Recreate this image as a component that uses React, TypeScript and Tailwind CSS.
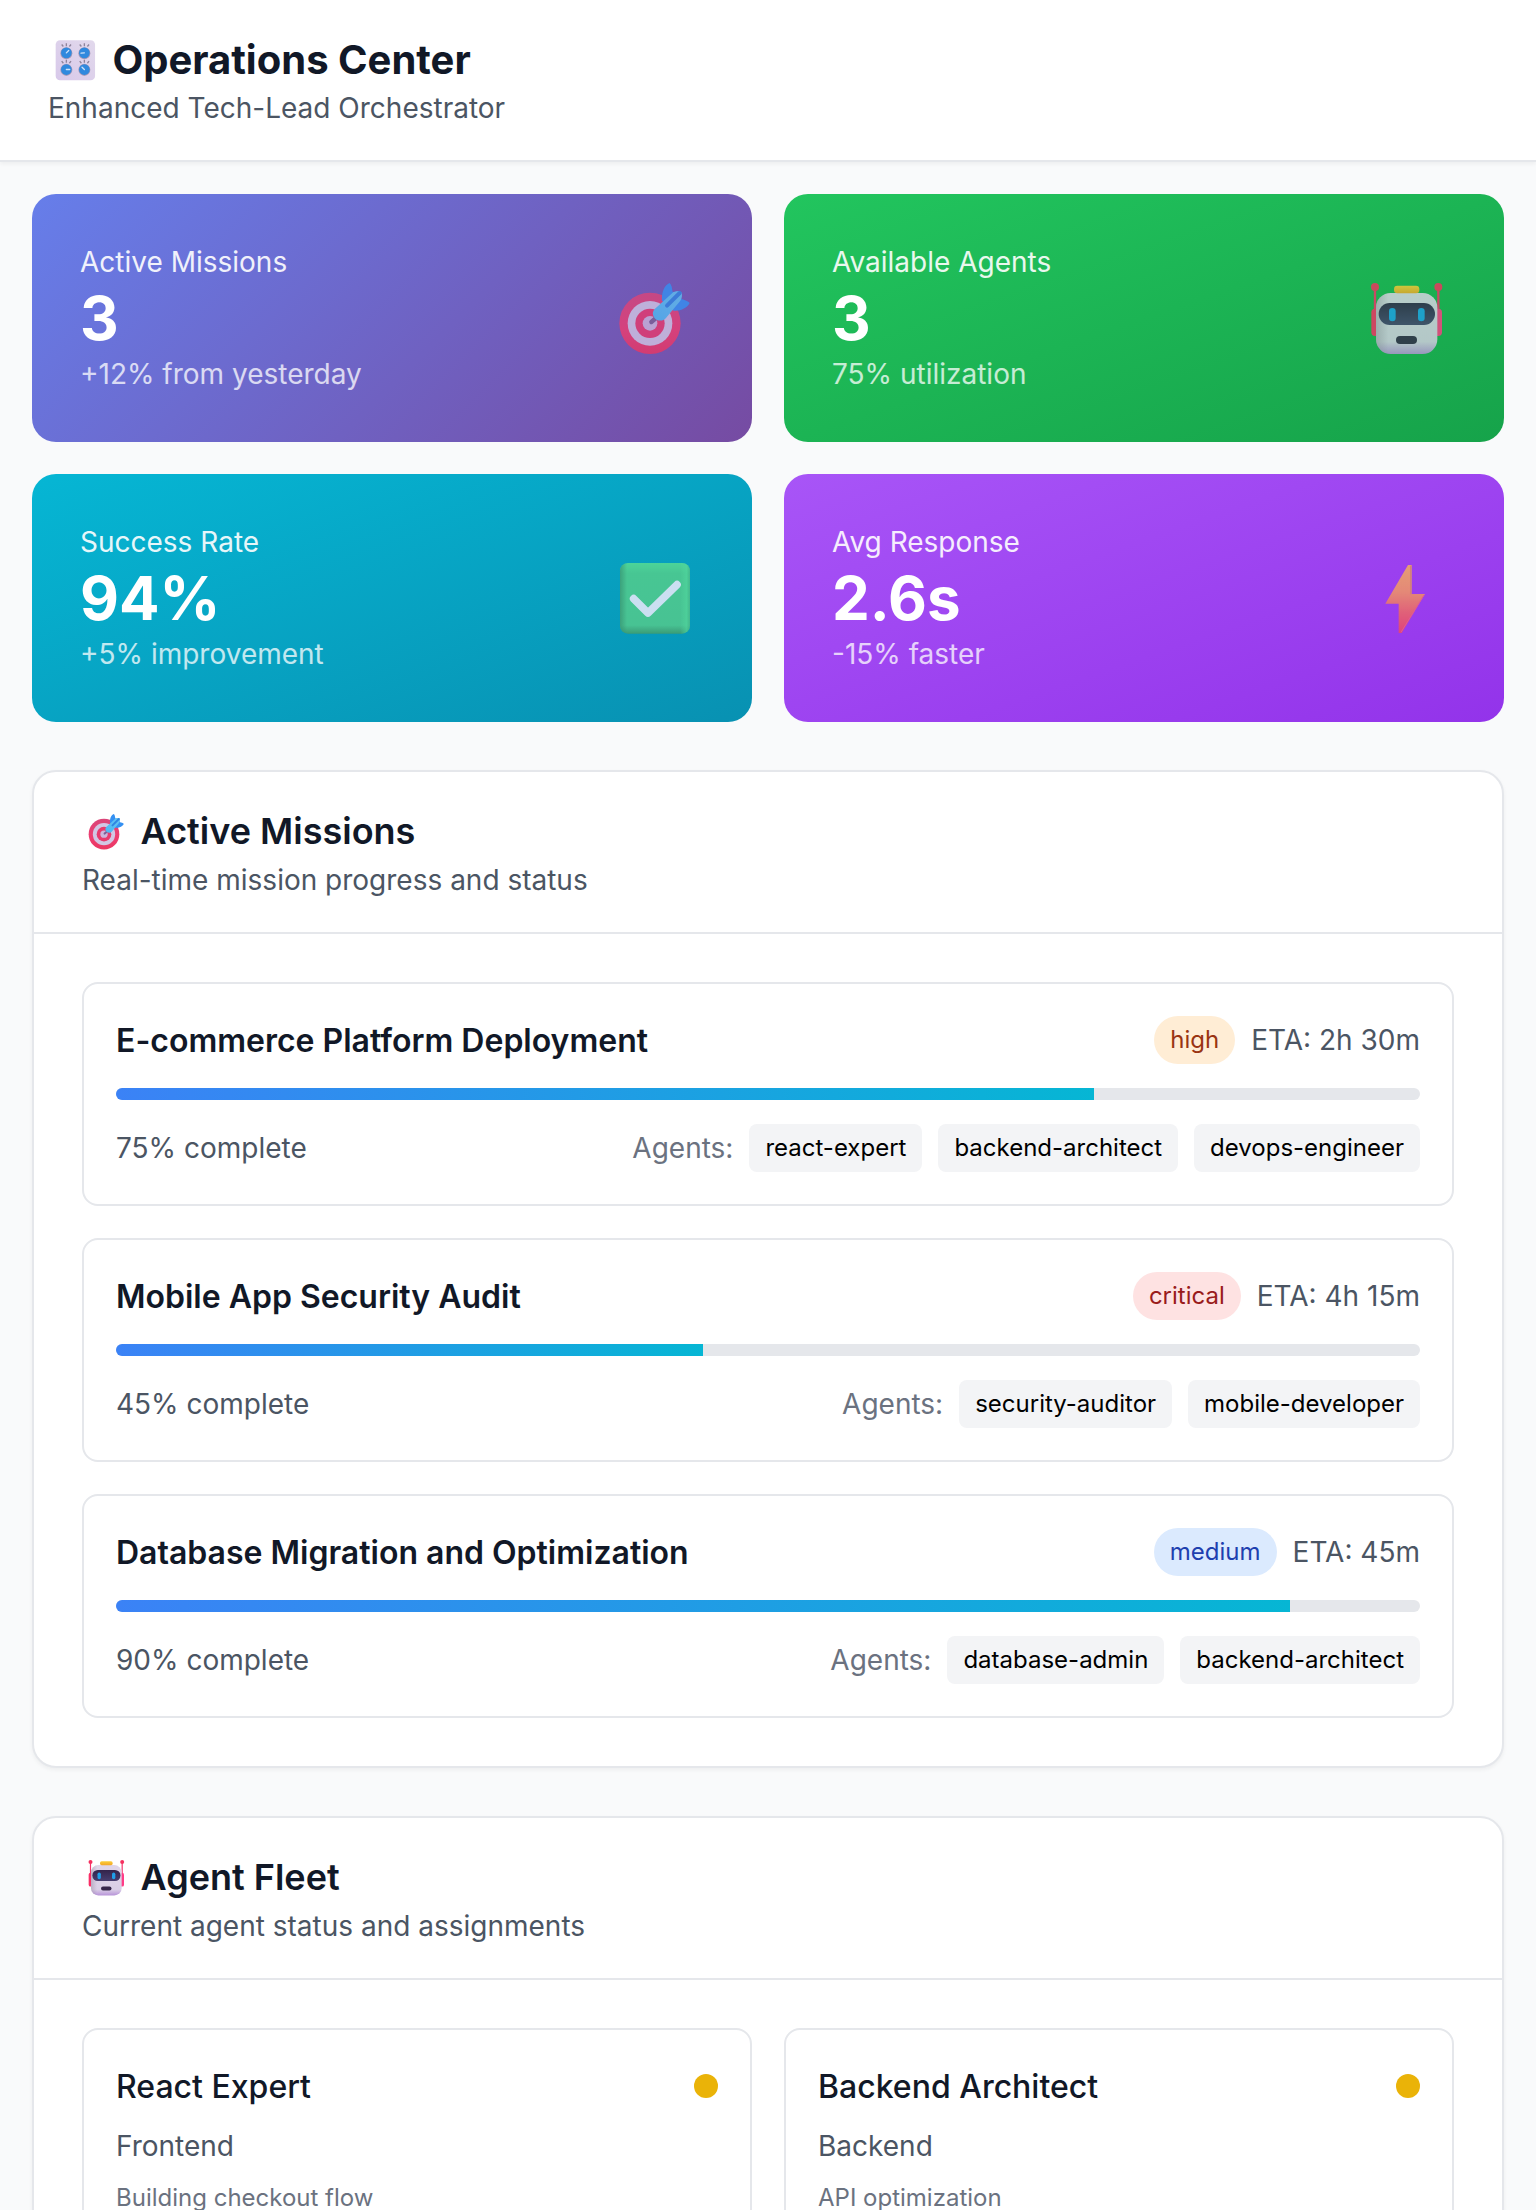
import type { ReactNode } from "react";

function TargetIcon({ className, id }: { className: string; id: string }) {
  return (
    <svg viewBox="18 27 294 294" className={className}>
      <defs>
        <linearGradient id={`${id}-ring`} x1="0" y1="0" x2="0" y2="1">
          <stop offset="0" stopColor="#da4579" />
          <stop offset="0.6" stopColor="#ee3d70" />
          <stop offset="1" stopColor="#ea3662" />
        </linearGradient>
        <linearGradient id={`${id}-dart`} x1="0" y1="1" x2="1" y2="0">
          <stop offset="0" stopColor="#4cb8f5" />
          <stop offset="1" stopColor="#62c4f0" />
        </linearGradient>
      </defs>
      <circle cx="150" cy="190" r="92" fill={`url(#${id}-ring)`} />
      <circle cx="150" cy="190" r="67" fill="#d2c6e4" />
      <circle cx="150" cy="190" r="44" fill="#e83a6d" />
      <circle cx="150" cy="190" r="22" fill="#ccb4dc" />
      <path d="M154 186 L168 174" stroke="#7c5f95" strokeWidth="13" strokeLinecap="round" />
      <path d="M186 122 C184 96 194 74 209 69 C215 74 216 86 218 96 L238 94 L243 108 L244 117 C254 120 265 123 269 129 C261 144 242 154 221 152 Z" fill="#3490f2" />
      <path d="M165 146 L218 98 C224 93 243 91 245 99 C247 105 246 115 241 122 L198 174 C188 185 171 184 163 173 C156 163 157 154 165 146 Z" fill={`url(#${id}-dart)`} />
      <path d="M201 137 L239 99" stroke="#2f85e2" strokeWidth="12" strokeLinecap="round" />
    </svg>
  );
}

function RobotIcon({ className, id }: { className: string; id: string }) {
  return (
    <svg viewBox="24 27 294 294" className={className}>
      <defs>
        <linearGradient id={`${id}-face`} x1="0" y1="0" x2="0" y2="1">
          <stop offset="0" stopColor="#e0d6e8" />
          <stop offset="0.8" stopColor="#dacfe6" />
          <stop offset="1" stopColor="#b793d8" />
        </linearGradient>
        <linearGradient id={`${id}-side`} x1="0" y1="0" x2="1" y2="0">
          <stop offset="0" stopColor="#8c7d94" stopOpacity="0.4" />
          <stop offset="0.2" stopColor="#8c7d94" stopOpacity="0" />
        </linearGradient>
        <linearGradient id={`${id}-visor`} x1="0" y1="0" x2="0" y2="1">
          <stop offset="0" stopColor="#33234a" />
          <stop offset="1" stopColor="#483f70" />
        </linearGradient>
        <linearGradient id={`${id}-hat`} x1="0" y1="0" x2="0" y2="1">
          <stop offset="0" stopColor="#fbcd38" />
          <stop offset="1" stopColor="#f3a628" />
        </linearGradient>
      </defs>
      <path d="M75 84 V160 M265 84 V160" stroke="#f5306a" strokeWidth="7" />
      <circle cx="75" cy="81" r="12" fill="#f5305f" />
      <circle cx="265" cy="81" r="12" fill="#f5305f" />
      <rect x="64" y="146" width="26" height="82" rx="11" fill="#fa2e66" />
      <rect x="250" y="146" width="26" height="82" rx="11" fill="#ff3c86" />
      <rect x="78" y="99" width="184" height="183" rx="44" fill={`url(#${id}-face)`} />
      <rect x="78" y="99" width="184" height="183" rx="44" fill={`url(#${id}-side)`} />
      <rect x="132" y="77" width="76" height="23" rx="10" fill={`url(#${id}-hat)`} />
      <rect x="86" y="129" width="169" height="66" rx="33" fill={`url(#${id}-visor)`} />
      <rect x="117" y="144" width="20" height="40" rx="10" fill="#209fe8" />
      <rect x="204" y="144" width="20" height="40" rx="10" fill="#209fe8" />
      <rect x="138" y="228" width="63" height="24" rx="12" fill="#36264a" />
    </svg>
  );
}

function CheckIcon({ className }: { className: string }) {
  return (
    <svg viewBox="18 27 294 294" className={className}>
      <defs>
        <linearGradient id="check-edge-y" x1="0" y1="0" x2="0" y2="1">
          <stop offset="0" stopColor="#5ee290" />
          <stop offset="0.15" stopColor="#58d089" />
          <stop offset="0.88" stopColor="#58cd8a" />
          <stop offset="1" stopColor="#479c66" />
        </linearGradient>
        <linearGradient id="check-edge-x" x1="0" y1="0" x2="1" y2="0">
          <stop offset="0" stopColor="#43905f" stopOpacity="0.7" />
          <stop offset="0.1" stopColor="#43905f" stopOpacity="0" />
          <stop offset="0.86" stopColor="#63e597" stopOpacity="0" />
          <stop offset="0.95" stopColor="#63e597" stopOpacity="0.6" />
          <stop offset="1" stopColor="#4fb67b" stopOpacity="0.6" />
        </linearGradient>
      </defs>
      <rect x="60" y="69" width="210" height="212" rx="24" fill="url(#check-edge-y)" />
      <rect x="60" y="69" width="210" height="212" rx="24" fill="url(#check-edge-x)" />
      <path d="M101 176 L144 219 L231 134" fill="none" stroke="#fdf0ff" strokeWidth="23" strokeLinecap="round" strokeLinejoin="round" />
    </svg>
  );
}

function BoltIcon({ className }: { className: string }) {
  return (
    <svg viewBox="24 27 294 294" className={className}>
      <defs>
        <linearGradient id="bolt-fill" x1="0" y1="0" x2="0" y2="1">
          <stop offset="0" stopColor="#f8b558" />
          <stop offset="0.4" stopColor="#f79b5a" />
          <stop offset="0.7" stopColor="#f26a5c" />
          <stop offset="1" stopColor="#f24560" />
        </linearGradient>
      </defs>
      <path d="M174 75 H185 V162 H225 L155 279 H146 V191 H106 Z" fill="url(#bolt-fill)" />
      <path d="M182 77 V163" stroke="#e09458" strokeWidth="4" />
      <path d="M222 165 L153 277" stroke="#f2607f" strokeWidth="3" />
    </svg>
  );
}

function Knob({ x, y, x2, y2 }: { x: number; y: number; x2: number; y2: number }) {
  return (
    <g>
      <path
        d={`M${x - 9} ${y - 19} L${x - 14} ${y - 25} M${x} ${y - 20} V${y - 29} M${x + 9} ${y - 19} L${x + 14} ${y - 25}`}
        stroke="#8f849b"
        strokeWidth="4"
      />
      <circle cx={x} cy={y + 1} r="18" fill="#a99bb8" />
      <circle cx={x} cy={y} r="16" fill="#3089de" />
      <path d={`M${x} ${y} L${x2} ${y2}`} stroke="#cfe2f8" strokeWidth="4" strokeLinecap="round" />
    </g>
  );
}

function KnobsIcon({ className }: { className: string }) {
  return (
    <svg viewBox="24 38.5 163 163" className={className}>
      <defs>
        <linearGradient id="knobs-panel" x1="1" y1="0" x2="0" y2="1">
          <stop offset="0" stopColor="#e2d9ec" />
          <stop offset="1" stopColor="#d8c9ea" />
        </linearGradient>
      </defs>
      <rect x="47" y="60" width="118" height="120" rx="13" fill="url(#knobs-panel)" />
      <Knob x={79} y={98} x2={86} y2={91} />
      <Knob x={133} y={98} x2={123} y2={99} />
      <Knob x={79} y={148} x2={89} y2={148} />
      <Knob x={133} y={148} x2={126} y2={141} />
    </svg>
  );
}

type Stat = { label: string; value: string; note: string; tone: string; icon: ReactNode };

const statIcon = "size-[98px] opacity-80";

const stats: Stat[] = [
  { label: "Active Missions", value: "3", note: "+12% from yesterday", tone: "bg-[linear-gradient(135deg,#667eea_0%,#764ba2_100%)]", icon: <TargetIcon id="stat-target" className={statIcon} /> },
  { label: "Available Agents", value: "3", note: "75% utilization", tone: "bg-[linear-gradient(to_bottom_right,#22c55e,#16a34a)]", icon: <RobotIcon id="stat-robot" className={statIcon} /> },
  { label: "Success Rate", value: "94%", note: "+5% improvement", tone: "bg-[linear-gradient(to_bottom_right,#06b6d4,#0891b2)]", icon: <CheckIcon className={statIcon} /> },
  { label: "Avg Response", value: "2.6s", note: "-15% faster", tone: "bg-[linear-gradient(to_bottom_right,#a855f7,#9333ea)]", icon: <BoltIcon className={statIcon} /> },
];

const missions = [
  { title: "E-commerce Platform Deployment", priority: "high", badge: "bg-[#ffedd5] text-[#9a3412]", eta: "2h 30m", progress: 75, agents: ["react-expert", "backend-architect", "devops-engineer"] },
  { title: "Mobile App Security Audit", priority: "critical", badge: "bg-[#fee2e2] text-[#991b1b]", eta: "4h 15m", progress: 45, agents: ["security-auditor", "mobile-developer"] },
  { title: "Database Migration and Optimization", priority: "medium", badge: "bg-[#dbeafe] text-[#1e40af]", eta: "45m", progress: 90, agents: ["database-admin", "backend-architect"] },
];

const agents = [
  { name: "React Expert", area: "Frontend", task: "Building checkout flow" },
  { name: "Backend Architect", area: "Backend", task: "API optimization" },
];

function Panel({ icon, title, subtitle, children }: { icon: ReactNode; title: string; subtitle: string; children: ReactNode }) {
  return (
    <section className="mt-12 rounded-3xl border-2 border-[#e5e7eb] bg-white shadow-[0_2px_4px_0_rgba(0,0,0,0.05)]">
      <div className="border-b-2 border-[#e5e7eb] px-12 py-8">
        <h2 className="flex items-center gap-[9.5px] pb-0.5 text-[36px] leading-[54px] font-semibold text-[#111827]">
          {icon}
          {title}
        </h2>
        <p className="text-[28px] leading-10 text-[#4b5563]">{subtitle}</p>
      </div>
      <div className="p-12">{children}</div>
    </section>
  );
}

export default function App() {
  return (
    <div className="h-[2210px] overflow-hidden bg-[#f9fafb] font-['Inter',sans-serif] text-black">
      <header className="border-b-2 border-[#e5e7eb] bg-white px-12 py-8 shadow-[0_2px_4px_0_rgba(0,0,0,0.05)]">
        <h1 className="flex items-center gap-[10px] text-[40px] leading-[56px] font-bold text-[#111827]">
          <KnobsIcon className="size-[54.4px]" />
          Operations Center
        </h1>
        <p className="text-[28px] leading-10 text-[#4b5563]">Enhanced Tech-Lead Orchestrator</p>
      </header>

      <main className="p-8">
        <div className="grid grid-cols-2 gap-8">
          {stats.map((s) => (
            <div key={s.label} className={`flex items-center justify-between rounded-3xl p-12 text-white ${s.tone}`}>
              <div>
                <p className="text-[28px] leading-10 opacity-90">{s.label}</p>
                <p className="text-[60px] leading-[72px] font-bold">{s.value}</p>
                <p className="text-[28px] leading-10 opacity-75">{s.note}</p>
              </div>
              {s.icon}
            </div>
          ))}
        </div>

        <Panel icon={<TargetIcon id="head-target" className="size-[49px]" />} title="Active Missions" subtitle="Real-time mission progress and status">
          <div className="flex flex-col gap-8">
            {missions.map((m) => (
              <article key={m.title} className="rounded-2xl border-2 border-[#e5e7eb] p-8">
                <div className="flex items-center justify-between">
                  <h3 className="pt-0.5 text-[32px] leading-[46px] font-semibold text-[#111827]">{m.title}</h3>
                  <div className="flex items-center gap-4">
                    <span className={`rounded-full px-4 py-2 text-[24px] leading-8 ${m.badge}`}>{m.priority}</span>
                    <span className="text-[28px] leading-10 text-[#4b5563]">ETA: {m.eta}</span>
                  </div>
                </div>
                <div className="my-6 h-3 overflow-hidden rounded-full bg-[#e5e7eb]">
                  <div className="h-full bg-[linear-gradient(90deg,#3b82f6,#06b6d4)]" style={{ width: `${m.progress}%` }} />
                </div>
                <div className="flex items-center justify-between text-[28px] leading-10">
                  <span className="text-[#4b5563]">{m.progress}% complete</span>
                  <div className="flex items-center gap-4">
                    <span className="text-[#6b7280]">Agents:</span>
                    {m.agents.map((a) => (
                      <span key={a} className="rounded-lg bg-[#f3f4f6] px-4 py-2 text-[24px] leading-8">{a}</span>
                    ))}
                  </div>
                </div>
              </article>
            ))}
          </div>
        </Panel>

        <Panel icon={<RobotIcon id="head-robot" className="size-[49px]" />} title="Agent Fleet" subtitle="Current agent status and assignments">
          <div className="grid grid-cols-2 gap-8">
            {agents.map((a) => (
              <article key={a.name} className="rounded-2xl border-2 border-[#e5e7eb] p-8">
                <div className="mb-4 flex items-center justify-between">
                  <h3 className="pt-0.5 text-[32px] leading-[46px] font-medium text-[#111827]">{a.name}</h3>
                  <span className="size-6 rounded-full bg-[#eab308]" />
                </div>
                <p className="mb-4 text-[28px] leading-10 text-[#4b5563]">{a.area}</p>
                <p className="text-[24px] leading-8 text-[#6b7280]">{a.task}</p>
              </article>
            ))}
          </div>
        </Panel>
      </main>
    </div>
  );
}
